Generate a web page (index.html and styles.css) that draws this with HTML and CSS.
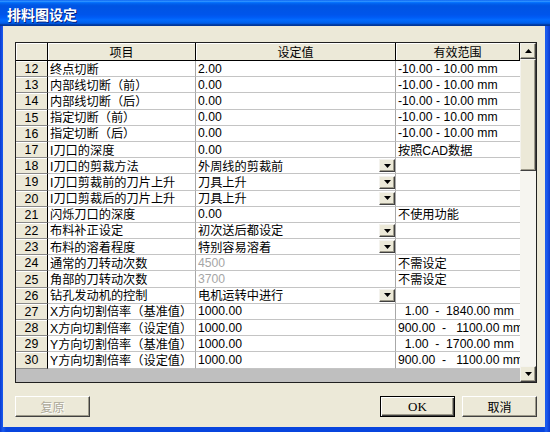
FILE: index.html
```html
<!DOCTYPE html>
<html lang="zh-CN">
<head>
<meta charset="utf-8">
<title>排料图设定</title>
<link rel="stylesheet" href="styles.css">
</head>
<body>
<div class="window">
  <div class="titlebar"><span class="title">排料图设定</span></div>
  <div class="client">
    <div class="grid">
      <div class="sheet">
        <div class="table">
          <div class="hd corner"></div>
          <div class="hd">项目</div>
          <div class="hd">设定值</div>
          <div class="hd">有效范围</div>

          <div class="rh">12</div><div class="c">终点切断</div><div class="c v">2.00</div><div class="c r">-10.00 - 10.00 mm</div>
          <div class="rh">13</div><div class="c">内部线切断（前）</div><div class="c v">0.00</div><div class="c r">-10.00 - 10.00 mm</div>
          <div class="rh">14</div><div class="c">内部线切断（后）</div><div class="c v">0.00</div><div class="c r">-10.00 - 10.00 mm</div>
          <div class="rh">15</div><div class="c">指定切断（前）</div><div class="c v">0.00</div><div class="c r">-10.00 - 10.00 mm</div>
          <div class="rh">16</div><div class="c">指定切断（后）</div><div class="c v">0.00</div><div class="c r">-10.00 - 10.00 mm</div>
          <div class="rh">17</div><div class="c">I刀口的深度</div><div class="c v">0.00</div><div class="c r">按照CAD数据</div>
          <div class="rh">18</div><div class="c">I刀口的剪裁方法</div><div class="c v"><span>外周线的剪裁前</span><span class="dd"><svg width="7" height="4" viewBox="0 0 7 4"><path d="M0 0h7L3.5 4z" fill="#000"/></svg></span></div><div class="c r"></div>
          <div class="rh">19</div><div class="c">I刀口剪裁前的刀片上升</div><div class="c v"><span>刀具上升</span><span class="dd"><svg width="7" height="4" viewBox="0 0 7 4"><path d="M0 0h7L3.5 4z" fill="#000"/></svg></span></div><div class="c r"></div>
          <div class="rh">20</div><div class="c">I刀口剪裁后的刀片上升</div><div class="c v"><span>刀具上升</span><span class="dd"><svg width="7" height="4" viewBox="0 0 7 4"><path d="M0 0h7L3.5 4z" fill="#000"/></svg></span></div><div class="c r"></div>
          <div class="rh">21</div><div class="c">闪烁刀口的深度</div><div class="c v">0.00</div><div class="c r">不使用功能</div>
          <div class="rh">22</div><div class="c">布料补正设定</div><div class="c v"><span>初次送后都设定</span><span class="dd"><svg width="7" height="4" viewBox="0 0 7 4"><path d="M0 0h7L3.5 4z" fill="#000"/></svg></span></div><div class="c r"></div>
          <div class="rh">23</div><div class="c">布料的溶着程度</div><div class="c v"><span>特别容易溶着</span><span class="dd"><svg width="7" height="4" viewBox="0 0 7 4"><path d="M0 0h7L3.5 4z" fill="#000"/></svg></span></div><div class="c r"></div>
          <div class="rh">24</div><div class="c">通常的刀转动次数</div><div class="c v dis">4500</div><div class="c r">不需设定</div>
          <div class="rh">25</div><div class="c">角部的刀转动次数</div><div class="c v dis">3700</div><div class="c r">不需设定</div>
          <div class="rh">26</div><div class="c">钻孔发动机的控制</div><div class="c v"><span>电机运转中进行</span><span class="dd"><svg width="7" height="4" viewBox="0 0 7 4"><path d="M0 0h7L3.5 4z" fill="#000"/></svg></span></div><div class="c r"></div>
          <div class="rh">27</div><div class="c">X方向切割倍率（基准值）</div><div class="c v">1000.00</div><div class="c r">  1.00  -  1840.00 mm</div>
          <div class="rh">28</div><div class="c">X方向切割倍率（设定值）</div><div class="c v">1000.00</div><div class="c r">900.00  -   1100.00 mm</div>
          <div class="rh">29</div><div class="c">Y方向切割倍率（基准值）</div><div class="c v">1000.00</div><div class="c r">  1.00  -  1700.00 mm</div>
          <div class="rh">30</div><div class="c">Y方向切割倍率（设定值）</div><div class="c v">1000.00</div><div class="c r">900.00  -   1100.00 mm</div>
        </div>
        <div class="empty"></div>
      </div>
      <div class="vscroll">
        <div class="sbtn"><svg width="7" height="4" viewBox="0 0 7 4"><path d="M3.5 0L7 4H0z" fill="#000"/></svg></div>
        <div class="thumb"></div>
        <div class="track"></div>
        <div class="sbtn"><svg width="7" height="4" viewBox="0 0 7 4"><path d="M0 0h7L3.5 4z" fill="#000"/></svg></div>
      </div>
    </div>
    <div class="buttons">
      <button class="btn disabled">复原</button>
      <button class="btn default">OK</button>
      <button class="btn">取消</button>
    </div>
  </div>
</div>
</body>
</html>
```

FILE: styles.css
```css
html, body {
  margin: 0;
  padding: 0;
}
body {
  width: 550px;
  height: 432px;
  overflow: hidden;
  font-family: "Liberation Sans", "Noto Sans CJK SC", sans-serif;
}
.window {
  width: 550px;
  height: 432px;
  display: flex;
  flex-direction: column;
  background: linear-gradient(90deg, #0a3ad0 0, #1a5cf0 3px, #0845de 6px, #0845de 544px, #1d5ff2 546px, #0a3ad0 550px);
}
.titlebar {
  height: 26px;
  flex: none;
  display: flex;
  align-items: center;
  padding-left: 7px;
  background: linear-gradient(180deg, #0058ee 0%, #3593ff 4%, #288eff 6%, #127dff 8%, #036ffc 10%, #0262ee 14%, #0057e5 20%, #0054e3 24%, #0055eb 56%, #005bf5 66%, #026afe 76%, #0062ef 86%, #0052d6 92%, #0040ab 94%, #003092 100%);
}
.title {
  color: #fff;
  font-family: "Noto Sans CJK SC", sans-serif;
  font-weight: bold;
  font-size: 14px;
  line-height: 16px;
  text-shadow: 1px 1px 0 #0a1f7a;
  margin-top: 1px;
}
.client {
  flex: 1;
  margin: 0 5px 5px 3px;
  background: #ece9d8;
  padding: 16px 8px 0 12px;
  display: flex;
  flex-direction: column;
}
.grid {
  width: 522px;
  height: 341px;
  box-sizing: border-box;
  border: 1px solid #202020;
  display: flex;
  background: #bfbfbf;
}
.sheet {
  width: 504px;
  display: flex;
  flex-direction: column;
}
.table {
  display: grid;
  grid-template-columns: 32px 148px 200px 124px;
  grid-template-rows: 18px repeat(19, 16.2px);
}
.hd {
  box-sizing: border-box;
  background: #ece9d8;
  border-right: 1px solid #000;
  border-bottom: 1px solid #000;
  box-shadow: inset 1px 1px 0 #fff;
  font-size: 12px;
  color: #000;
  display: flex;
  align-items: center;
  justify-content: center;
  font-family: "Noto Sans CJK SC", sans-serif;
}
.rh {
  box-sizing: border-box;
  background: #ece9d8;
  border-right: 1px solid #000;
  border-bottom: 1px solid #8a8a8a;
  box-shadow: inset 0 1px 0 #fff;
  font-size: 12.4px;
  display: flex;
  align-items: center;
  justify-content: center;
  padding-top: 1px;
  color: #000;
}
.c {
  box-sizing: border-box;
  background: #fff;
  border-right: 1px solid #a8a8a8;
  border-bottom: 1px solid #c4c4c4;
  font-size: 12.2px;
  color: #000;
  padding-left: 2px;
  white-space: pre;
  overflow: hidden;
  display: flex;
  align-items: center;
}
.c.r {
  border-right: none;
}
.c.v {
  justify-content: space-between;
}
.c.dis {
  color: #a6a6a6;
}
.dd {
  width: 16px;
  height: 13px;
  box-sizing: border-box;
  align-self: flex-end;
  margin-bottom: 1px;
  background: #ece9d8;
  border: 1px solid;
  border-color: #f4f3ee #404040 #404040 #f4f3ee;
  box-shadow: inset -1px -1px 0 #9d9a8a;
  display: flex;
  align-items: center;
  justify-content: center;
}
.dd svg, .sbtn svg {
  display: block;
}
.empty {
  flex: 1;
  background: #bfbfbf;
}
.vscroll {
  width: 16px;
  display: flex;
  flex-direction: column;
  background: #f4f3ee;
}
.sbtn {
  height: 16px;
  flex: none;
  box-sizing: border-box;
  background: #ece9d8;
  border: 1px solid;
  border-color: #f4f3ee #404040 #404040 #f4f3ee;
  box-shadow: inset -1px -1px 0 #9d9a8a;
  display: flex;
  align-items: center;
  justify-content: center;
}
.thumb {
  height: 112px;
  flex: none;
  box-sizing: border-box;
  background: #ece9d8;
  border: 1px solid;
  border-color: #f4f3ee #404040 #404040 #f4f3ee;
  box-shadow: inset -1px -1px 0 #9d9a8a;
}
.track {
  flex: 1;
  background: #f6f5f0;
}
.buttons {
  display: flex;
  gap: 7px;
  margin-top: 13px;
  width: 522px;
}
.btn {
  width: 75px;
  height: 21px;
  box-sizing: border-box;
  margin: 0;
  padding: 0;
  background: #ece9d8;
  border: 1px solid;
  border-color: #fff #404040 #404040 #fff;
  box-shadow: inset -1px -1px 0 #9d9a8a;
  font-family: "Noto Sans CJK SC", sans-serif;
  font-size: 12px;
  color: #000;
}
.btn.disabled {
  color: #aca899;
  text-shadow: 1px 1px 0 #fff;
}
.btn.default {
  margin-left: auto;
  border: 1px solid #000;
  box-shadow: inset 1px 1px 0 #fff, inset -1px -1px 0 #404040, inset -2px -2px 0 #9d9a8a;
  font-family: "Liberation Serif", serif;
  font-size: 13px;
}
```
